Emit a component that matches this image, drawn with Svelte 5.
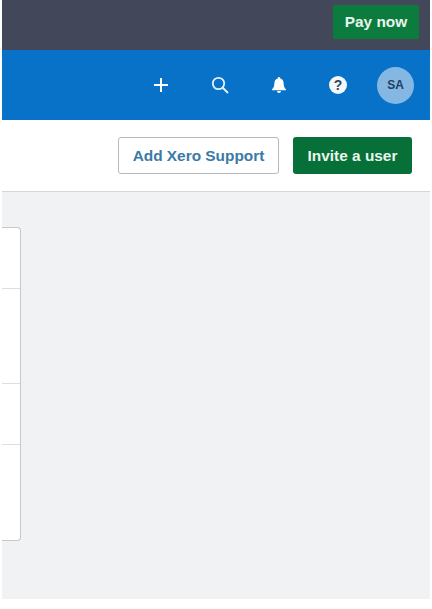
<script>
  const dividers = [
    { height: 61 },
    { height: 95 },
    { height: 61 },
    { height: 95 }
  ];
</script>

<div class="page">
  <header class="billing">
    <button class="pay">Pay now</button>
  </header>
  <nav class="nav">
    <svg class="ic" viewBox="0 0 16 16" width="16" height="16" aria-hidden="true"><path d="M8 1v14M1 8h14" stroke="#fff" stroke-width="2" fill="none"/></svg>
    <svg class="ic" viewBox="0 0 18 18" width="18" height="18" aria-hidden="true"><circle cx="7.500" cy="7.500" r="5.700" stroke="#e3f1fb" stroke-width="1.800" fill="none"/><path d="M11.500 11.500l5.500 5.500" stroke="#e3f1fb" stroke-width="2" fill="none"/></svg>
    <svg class="ic" viewBox="0 0 18 18" width="18" height="18" aria-hidden="true"><path d="M9 1a1.300 1.300 0 0 1 1.300 1.500C13 3.200 13.600 5.500 13.700 8c.1 2.500.8 3.800 2.300 5.500v.8H2v-.8C3.500 11.800 4.200 10.500 4.300 8c.1-2.500.7-4.800 3.400-5.500A1.300 1.300 0 0 1 9 1zM7 15h4a2 2 0 0 1-4 0z" fill="#fff"/></svg>
    <span class="help">?</span>
    <span class="avatar">SA</span>
  </nav>
  <div class="actions">
    <button class="support">Add Xero Support</button>
    <button class="invite">Invite a user</button>
  </div>
  <main class="content">
    <section class="card">
      {#each dividers as row}
        <div class="row" style="height: {row.height}px"></div>
      {/each}
    </section>
  </main>
</div>

<style>
  :global(body) { margin: 0; background: #fff; }
  .page {
    width: 428px; height: 599px; margin-left: 2px;
    display: flex; flex-direction: column;
    background: #f1f2f4; overflow: hidden;
    font-family: "Liberation Sans", Arial, sans-serif;
  }
  button { font-family: inherit; font-weight: 700; cursor: pointer; padding: 0; }
  .billing {
    height: 50px; flex: none; background: #42475a;
    display: flex; justify-content: flex-end; align-items: flex-start;
    padding: 5px 11px 0 0; box-sizing: border-box;
  }
  .pay {
    width: 86px; height: 34px; border: 0; border-radius: 2px;
    background: #0b7c3e; color: #e9f5ee; font-size: 15.4px;
  }
  .nav {
    height: 70px; flex: none; background: #0772c8;
    display: flex; align-items: center; justify-content: flex-end;
    padding-right: 16px; box-sizing: border-box;
  }
  .ic { flex: none; }
  .nav svg:nth-child(1) { margin-right: 42px; }
  .nav svg:nth-child(2) { margin-right: 41px; }
  .nav svg:nth-child(3) { margin-right: 41px; }
  .help {
    width: 18px; height: 18px; border-radius: 50%; background: #f4f8fb; color: #33475b;
    font-size: 14px; font-weight: 700; display: flex; align-items: center; justify-content: center;
    margin-right: 30px;
  }
  .avatar {
    width: 37px; height: 37px; border-radius: 50%; background: #85b7e3; color: #1f3f63;
    font-size: 12px; font-weight: 700; display: flex; align-items: center; justify-content: center;
  }
  .actions {
    height: 72px; flex: none; background: #fff; border-bottom: 1px solid #d5d7da;
    display: flex; align-items: flex-start; justify-content: flex-end; gap: 14px;
    padding: 17px 18px 0 0; box-sizing: border-box;
  }
  .support {
    width: 161px; height: 37px; border: 1px solid #b5b9bd; border-radius: 3px;
    background: #fff; color: #3a7aa6; font-size: 15.4px;
  }
  .invite {
    width: 119px; height: 37px; border: 0; border-radius: 3px;
    background: #076f38; color: #eaf5ee; font-size: 15.4px;
  }
  .content { flex: 1; padding-top: 35px; }
  .card {
    width: 19px; box-sizing: border-box; background: #fff;
    border: 1px solid #c6c9cc; border-left: 0; border-radius: 0 4px 4px 0;
  }
  .row { border-bottom: 1px solid #dcdee1; box-sizing: border-box; }
  .row:last-child { border-bottom: 0; }
</style>
